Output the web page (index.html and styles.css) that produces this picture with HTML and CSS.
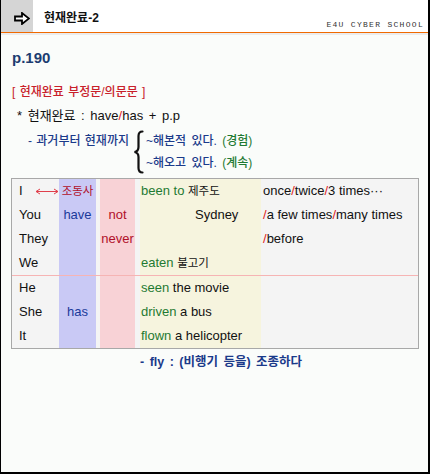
FILE: index.html
```html
<!DOCTYPE html>
<html lang="ko">
<head>
<meta charset="utf-8">
<link rel="stylesheet" href="styles.css">
</head>
<body>
<div class="frame">
  <header class="top">
    <div class="icon-box">
      <svg width="16" height="13" viewBox="0 0 16 13"><path d="M1 4.5 H8 V1 L15 6.5 L8 12 V8.5 H1 Z" fill="#fff" stroke="#000" stroke-width="1.8" stroke-linejoin="miter"/></svg>
    </div>
    <h1 class="title">현재완료-2</h1>
    <div class="brand">E4U CYBER SCHOOL</div>
  </header>
  <div class="rule"></div>
  <main class="content">
    <p class="page-no">p.190</p>
    <p class="heading">[ 현재완료 부정문/의문문 ]</p>
    <p class="formula">* 현재완료 : have<span class="slash">/</span>has + p.p</p>
    <div class="meaning">
      <span class="label">- 과거부터 현재까지</span>
      <svg class="brace" width="11" height="44" viewBox="0 0 11 44"><path d="M9.5 1.5 Q5.5 1.5 5.5 6 V17 Q5.5 21.3 1.5 22 Q5.5 22.7 5.5 27 V38 Q5.5 42.5 9.5 42.5" fill="none" stroke="#111" stroke-width="2.2" stroke-linecap="round"/></svg>
      <div class="lines">
        <div>~해본적 있다. <span class="green">(경험)</span></div>
        <div>~해오고 있다. <span class="green">(계속)</span></div>
      </div>
    </div>
    <div class="table">
      <div class="row">
        <div class="c subj">I<svg class="arrow" width="24" height="7" viewBox="0 0 24 7"><path d="M1 3.5 H23 M1 3.5 L5 1 M1 3.5 L5 6 M23 3.5 L19 1 M23 3.5 L19 6" stroke="#e0404c" stroke-width="1" fill="none"/></svg></div>
        <div class="c aux"><span class="dred ko">조동사</span></div>
        <div class="c neg"></div>
        <div class="c pp"><span class="green">been to</span> <span class="ko">제주도</span></div>
        <div class="c adv">once<span class="slash">/</span>twice<span class="slash">/</span>3 times···</div>
      </div>
      <div class="row">
        <div class="c subj">You</div>
        <div class="c aux"><span class="blue">have</span></div>
        <div class="c neg"><span class="dred">not</span></div>
        <div class="c pp"><span class="indent">Sydney</span></div>
        <div class="c adv"><span class="slash">/</span>a few times<span class="slash">/</span>many times</div>
      </div>
      <div class="row">
        <div class="c subj">They</div>
        <div class="c aux"></div>
        <div class="c neg"><span class="dred">never</span></div>
        <div class="c pp"></div>
        <div class="c adv"><span class="slash">/</span>before</div>
      </div>
      <div class="row">
        <div class="c subj">We</div>
        <div class="c aux"></div>
        <div class="c neg"></div>
        <div class="c pp"><span class="green">eaten</span> <span class="ko">불고기</span></div>
        <div class="c adv"></div>
      </div>
      <div class="row sep">
        <div class="c subj">He</div>
        <div class="c aux"></div>
        <div class="c neg"></div>
        <div class="c pp"><span class="green">seen</span> the movie</div>
        <div class="c adv"></div>
      </div>
      <div class="row">
        <div class="c subj">She</div>
        <div class="c aux"><span class="blue">has</span></div>
        <div class="c neg"></div>
        <div class="c pp"><span class="green">driven</span> a bus</div>
        <div class="c adv"></div>
      </div>
      <div class="row">
        <div class="c subj">It</div>
        <div class="c aux"></div>
        <div class="c neg"></div>
        <div class="c pp"><span class="green">flown</span> a helicopter</div>
        <div class="c adv"></div>
      </div>
    </div>
    <p class="note">- fly : (비행기 등을) 조종하다</p>
  </main>
</div>
</body>
</html>
```
FILE: styles.css
```css
body {
  margin: 0;
}
.frame {
  width: 430px;
  height: 474px;
  box-sizing: border-box;
  border-left: 1px solid #000;
  border-right: 2px solid #000;
  border-bottom: 2px solid #000;
  background: #fafcfa;
  font-family: "Liberation Sans", "Noto Sans CJK KR", sans-serif;
  color: #111;
}
.top {
  display: flex;
  align-items: center;
  height: 32px;
  background: #fff;
  border-bottom: 1px solid #f06a00;
}
.icon-box {
  width: 32px;
  height: 32px;
  background: #d5d5d5;
  display: flex;
  align-items: center;
  justify-content: center;
}
.icon-box svg {
  margin-left: 10px;
  margin-top: 4px;
}
.title {
  margin: 0 0 0 11px;
  font-size: 12px;
  font-weight: bold;
  color: #111;
}
.brand {
  margin-left: auto;
  margin-right: 4px;
  align-self: flex-end;
  margin-bottom: 3px;
  font-family: "Liberation Mono", monospace;
  font-size: 8px;
  letter-spacing: 1.3px;
  color: #333;
}
.rule {
  height: 2px;
  background: #ececec;
}
.content {
  padding: 0 10px;
}
.content p {
  margin: 0;
}
.page-no {
  margin-top: 12px !important;
  padding-left: 1px;
  font-size: 15px;
  font-weight: bold;
  line-height: 22px;
  color: #1c3c70;
}
.heading {
  margin-top: 12px !important;
  padding-left: 1px;
  font-size: 12px;
  line-height: 22px;
  word-spacing: 1px;
  color: #c8202a;
  font-weight: 500;
}
.formula {
  margin-top: 1px !important;
  padding-left: 6px;
  font-size: 13px;
  line-height: 24px;
  word-spacing: 2px;
}
.slash {
  color: #e0201a;
}
.meaning {
  display: flex;
  margin-top: 2px;
  padding-left: 17px;
  color: #1a3a8a;
  font-size: 12px;
  font-weight: 500;
}
.label {
  line-height: 22px;
  word-spacing: 1px;
}
.brace {
  margin-left: 4px;
  margin-right: 2px;
  flex: none;
}
.lines div {
  line-height: 22px;
  word-spacing: 2px;
}
.green {
  color: #1f7a32;
}
.blue {
  color: #1a3a9a;
}
.dred {
  color: #b0102a;
}
.ko {
  font-size: 11.5px;
}
.table {
  margin-top: 4px;
  width: 408px;
  box-sizing: border-box;
  border: 1px solid #a8a8a8;
  background: #f4f4f4;
  font-size: 13px;
}
.row {
  display: grid;
  grid-template-columns: 47px 37px 39px 126px 1fr;
  height: 24px;
}
.row.sep {
  border-top: 1px solid #f6b4b4;
}
.c {
  line-height: 24px;
  white-space: nowrap;
}
.subj {
  padding-left: 7px;
  display: flex;
  align-items: center;
}
.arrow {
  margin-left: 12px;
}
.aux {
  background: #c9c9f5;
  text-align: center;
}
.neg {
  margin-left: 4px;
  background: #f8d2d6;
  text-align: center;
}
.pp {
  margin-left: 5px;
  padding-left: 1px;
  background: #f6f4de;
}
.indent {
  padding-left: 54px;
}
.adv {
  padding-left: 2px;
}
.note {
  margin-top: 3px !important;
  padding-left: 129px;
  font-size: 12.5px;
  line-height: 20px;
  font-weight: bold;
  word-spacing: 2px;
  color: #1a3a8a;
}
```
